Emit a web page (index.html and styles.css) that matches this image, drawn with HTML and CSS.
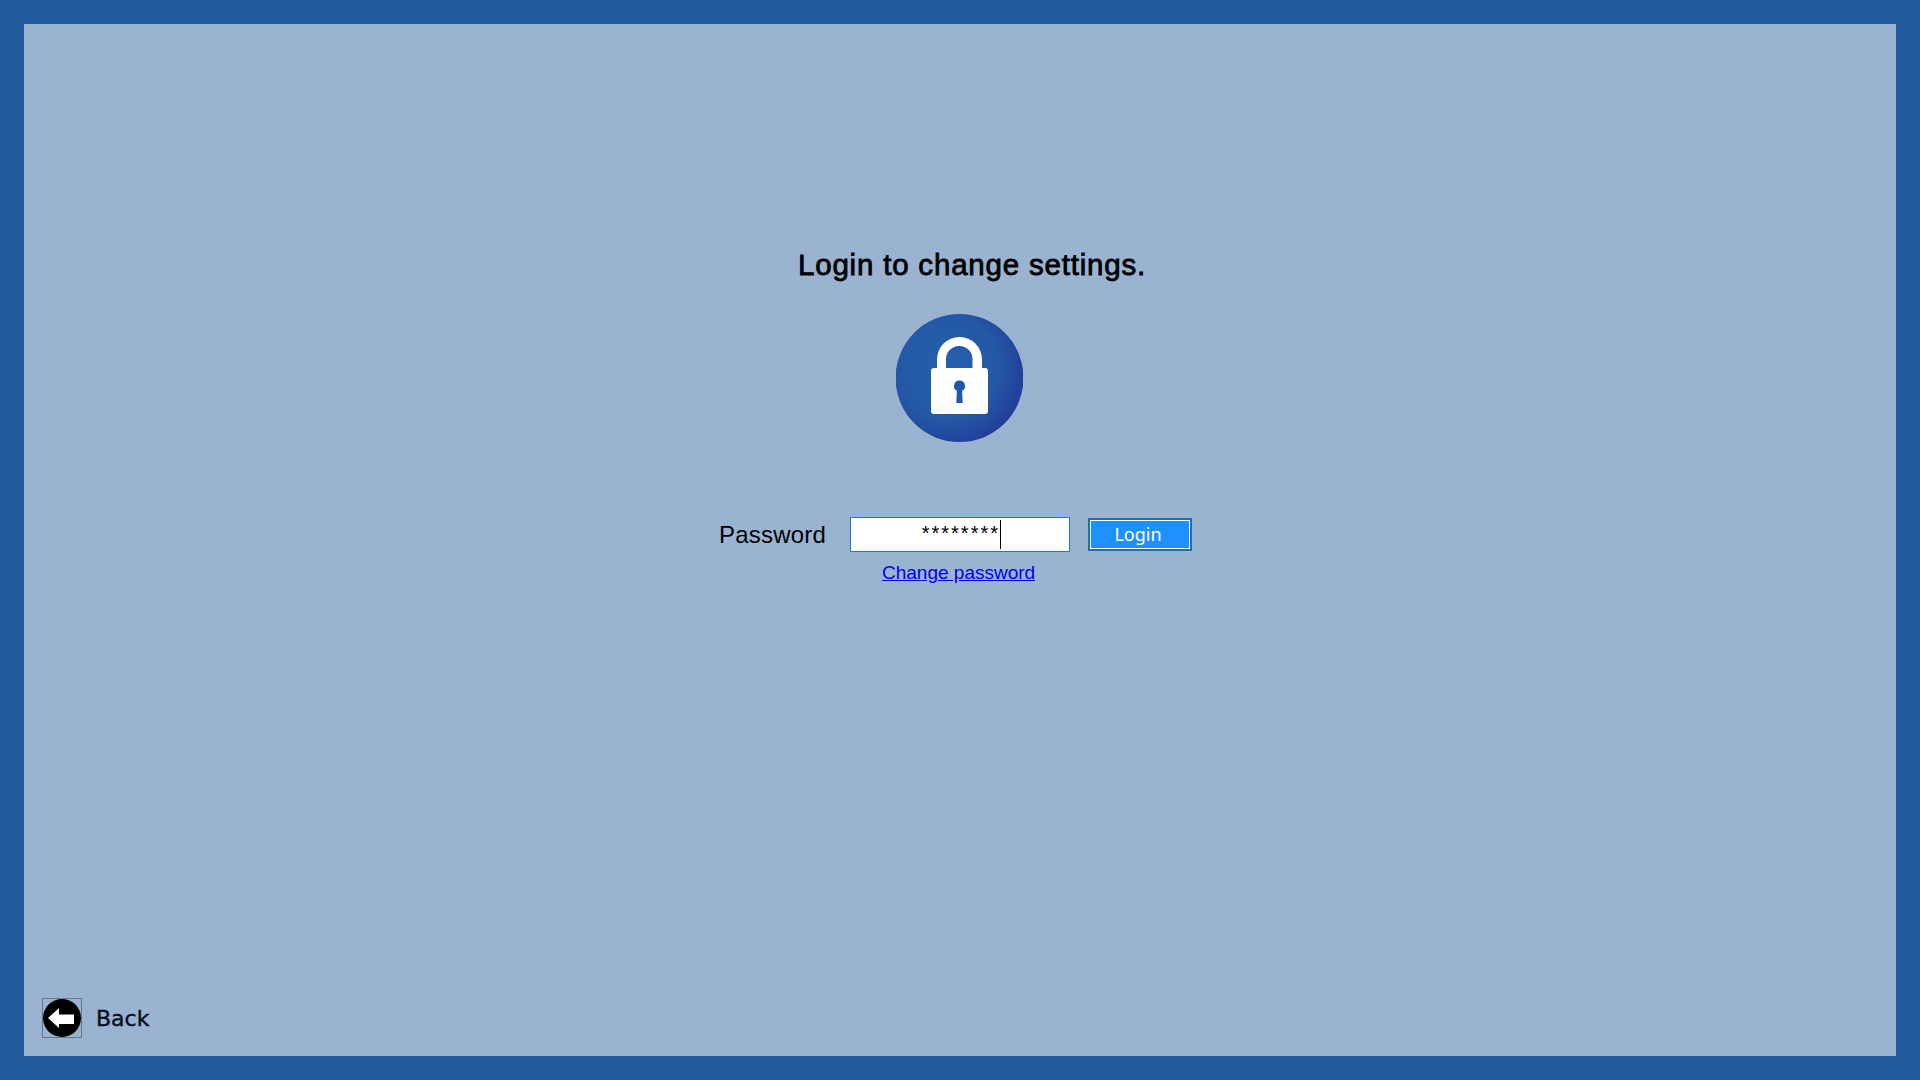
FILE: index.html
```html
<!DOCTYPE html>
<html lang="en">
<head>
<meta charset="utf-8">
<title>Login</title>
<link rel="stylesheet" href="styles.css">
</head>
<body>
<main class="panel">
  <h1 class="title">Login to change settings.</h1>
  <svg class="lock" viewBox="0 0 127 128" width="127" height="128" aria-hidden="true">
    <defs>
      <radialGradient id="lockFill" cx="0.4" cy="0.42" r="0.62">
        <stop offset="0" stop-color="#2460ab"/>
        <stop offset="0.65" stop-color="#2458a6"/>
        <stop offset="1" stop-color="#213f98"/>
      </radialGradient>
    </defs>
    <circle cx="63.5" cy="64" r="64" fill="url(#lockFill)"/>
    <path fill="#fff" d="M41 55V45.500A22.500 22.500 0 0 1 86 45.500V55H76.500V45A13.250 13 0 0 0 50 45V55Z"/>
    <rect x="35" y="54" width="57" height="46" rx="3" fill="#fff"/>
    <path fill="#2257a5" d="M63.500 66.500a5.500 5.500 0 0 1 2.600 10.350L66.700 89H60.300L60.900 76.850a5.500 5.500 0 0 1 2.600-10.350Z"/>
  </svg>
  <form class="form">
    <div class="form-row">
      <label class="label">Password</label>
      <div class="input"><span class="stars">********</span><span class="caret"></span></div>
      <button class="login" type="button">Login</button>
    </div>
    <a class="change" href="#">Change password</a>
  </form>
  <div class="back">
    <span class="back-box">
      <svg viewBox="0 0 38 38" width="38" height="38" aria-hidden="true">
        <circle cx="19" cy="19" r="19" fill="#000"/>
        <path fill="#fff" d="M5 19 16 9V15.500H31V25H16V29Z"/>
      </svg>
    </span>
    <span class="back-text">Back</span>
  </div>
</main>
</body>
</html>
```

FILE: styles.css
```css
* { box-sizing: border-box; }

html, body { height: 100%; }

body {
  margin: 0;
  padding: 24px;
  background: #235c9c;
  font-family: "Liberation Sans", Arial, sans-serif;
  color: #000;
}

.panel {
  height: 1032px;
  background: #99b3d0;
  display: flex;
  flex-direction: column;
  padding: 221px 0 18px 18px;
}

.title {
  margin: 0 0 0 756px;
  font-size: 29.500px;
  line-height: 40px;
  font-weight: 400;
  letter-spacing: 0.800px;
  -webkit-text-stroke: 0.8px #000;
  white-space: nowrap;
}

.lock {
  display: block;
  margin: 29px 0 0 854px;
}

.form {
  display: flex;
  flex-direction: column;
  margin: 75px 0 0 677px;
}

.form-row {
  display: flex;
  align-items: center;
  height: 35px;
}

.label {
  width: 131px;
  font-size: 24px;
  letter-spacing: 0.200px;
}

.input {
  width: 220px;
  height: 35px;
  background: #fff;
  border: 1px solid #1e78d0;
  display: flex;
  justify-content: flex-end;
  align-items: center;
  padding-right: 68px;
}

.stars {
  font-size: 20px;
  line-height: 24px;
  letter-spacing: 2px;
  margin-bottom: 4px;
}

.caret {
  width: 1px;
  height: 29px;
  background: #000;
}

.login {
  width: 104px;
  height: 33px;
  margin: 0 0 0 18px;
  padding: 0 4px 1px 0;
  background: #1e90ff;
  color: #fff;
  border: 2px solid #1a70bf;
  box-shadow: inset 0 0 0 1px #fff;
  font-family: "Noto Sans", sans-serif;
  font-size: 18px;
}

.change {
  margin: 10px 0 0 163px;
  align-self: flex-start;
  color: #0000ee;
  font-size: 19px;
  line-height: 22px;
}

.back {
  margin-top: auto;
  display: flex;
  align-items: center;
  gap: 14px;
}

.back-box {
  width: 40px;
  height: 40px;
  border: 1px solid #66758c;
  display: flex;
}

.back-text {
  font-family: "DejaVu Sans", sans-serif;
  font-size: 22px;
  color: #0a0f1c;
  -webkit-text-stroke: 0.4px #0a0f1c;
}
```
